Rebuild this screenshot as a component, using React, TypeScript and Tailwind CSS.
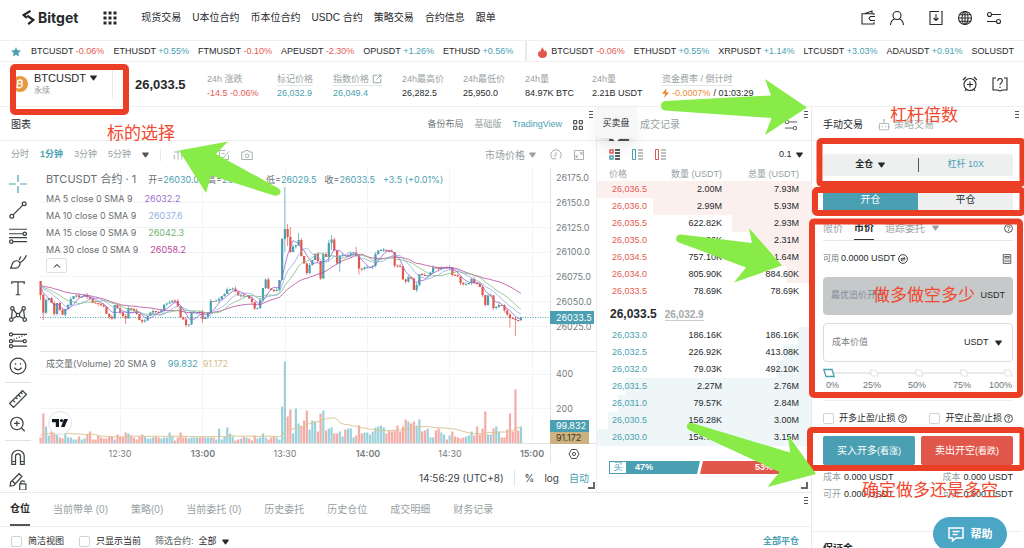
import type { ReactNode } from "react";

interface TickerItem {
  pair: string;
  change: string;
}

interface BookRow {
  price: string;
  amount: string;
  total: string;
  depth: number;
}

const navLinks = ["现货交易", "U本位合约", "币本位合约", "USDC 合约", "策略交易", "合约信息", "跟单"];

const favorites: TickerItem[] = [
  { pair: "BTCUSDT", change: "-0.06%" },
  { pair: "ETHUSDT", change: "+0.55%" },
  { pair: "FTMUSDT", change: "-0.10%" },
  { pair: "APEUSDT", change: "-2.30%" },
  { pair: "OPUSDT", change: "+1.26%" },
  { pair: "ETHUSD", change: "+0.56%" },
];

const hotPairs: TickerItem[] = [
  { pair: "BTCUSDT", change: "-0.06%" },
  { pair: "ETHUSDT", change: "+0.55%" },
  { pair: "XRPUSDT", change: "+1.14%" },
  { pair: "LTCUSDT", change: "+3.03%" },
  { pair: "ADAUSDT", change: "+0.91%" },
  { pair: "SOLUSDT", change: "" },
];

const asks: BookRow[] = [
  { price: "26,036.5", amount: "2.00M", total: "7.93M", depth: 100 },
  { price: "26,036.0", amount: "2.99M", total: "5.93M", depth: 74 },
  { price: "26,035.5", amount: "622.82K", total: "2.93M", depth: 37 },
  { price: "26,035.0", amount: "671.06K", total: "2.31M", depth: 28 },
  { price: "26,034.5", amount: "757.10K", total: "1.64M", depth: 20 },
  { price: "26,034.0", amount: "805.90K", total: "884.60K", depth: 11 },
  { price: "26,033.5", amount: "78.69K", total: "78.69K", depth: 0 },
];

const bids: BookRow[] = [
  { price: "26,033.0", amount: "186.16K", total: "186.16K", depth: 6 },
  { price: "26,032.5", amount: "226.92K", total: "413.08K", depth: 13 },
  { price: "26,032.0", amount: "79.03K", total: "492.10K", depth: 16 },
  { price: "26,031.5", amount: "2.27M", total: "2.76M", depth: 87 },
  { price: "26,031.0", amount: "79.57K", total: "2.84M", depth: 90 },
  { price: "26,030.5", amount: "156.28K", total: "3.00M", depth: 95 },
  { price: "26,030.0", amount: "154.72K", total: "3.15M", depth: 100 },
];

const positionTabs = [
  "仓位", "当前带单 (0)", "策略(0)", "当前委托 (0)", "历史委托", "历史仓位", "成交明细", "财务记录",
];

// One close per minute, already on the chart's vertical scale
const closes = [
  295, 312.7, 300, 298, 303, 314, 303, 310, 314.7, 309, 305, 299, 296, 295.5, 297, 296.5, 295, 297, 299, 302.5,
  303, 304, 305, 306.5, 314, 317, 318.5, 305, 308, 312.5, 316, 318.5, 308, 309, 310.5, 314, 320, 321.5, 320.5, 316,
  312.5, 311, 312, 312.5, 310.5, 304.5, 303.5, 302.5, 300.5, 301, 306, 317.5, 319.5, 325, 324.5, 313, 312.5, 312, 312.3, 319,
  317, 313, 301, 301.3, 300.5, 299, 296, 294, 289.5, 289, 288.5, 291.5, 295.5, 295.3, 296, 296, 298.5, 302, 308.5, 308.3,
  300, 288, 279.5, 288.5, 290, 290.2, 290, 280, 239, 229, 237, 252, 246.5, 245, 240, 256, 263.5, 273, 265, 260,
  254, 261, 278.5, 254, 257, 243, 239.5, 250.5, 263.5, 256, 255, 255.2, 255, 253.5, 252.5, 255.5, 268.5, 269, 267.5, 267.3,
  266.8, 266, 254, 250.5, 250, 249.8, 251, 251.2, 252, 265.5, 266, 266.5, 279.5, 281.5, 277, 278.5, 290, 285, 274, 275,
  275.5, 275.3, 272.5, 267.5, 268, 269, 268, 267.3, 267.7, 267.3, 275, 275.2, 276.5, 283, 284.3, 284.2, 283, 279, 283, 284,
  287, 295, 305, 295.5, 295.3, 308, 307, 305, 305.2, 310.5, 314.5, 318, 318.6, 320, 320.2, 317.7,
];

const volumes = [
  6, 30, 17, 8, 12, 10, 9, 6, 5, 10, 6, 6, 4, 4, 7, 4, 5, 9, 12, 4, 4, 8, 6, 5, 5, 7, 7, 4, 9, 7, 6, 11, 10, 8, 6, 4, 7, 9, 7, 5,
  5, 6, 7, 6, 5, 6, 6, 11, 7, 3, 6, 11, 6, 6, 5, 6, 6, 6, 6, 7, 6, 6, 6, 6, 4, 15, 4, 7, 16, 10, 7, 3, 4, 5, 7, 6, 5, 3, 8, 5,
  6, 10, 6, 4, 6, 7, 6, 4, 37, 82, 27, 34, 10, 35, 20, 17, 23, 33, 14, 23, 22, 12, 30, 33, 13, 15, 16, 10, 10, 12, 7, 14, 15, 15, 6, 8, 18, 10, 11, 11,
  9, 12, 16, 17, 18, 16, 10, 13, 12, 13, 18, 12, 17, 24, 22, 20, 22, 18, 24, 12, 13, 15, 6, 6, 13, 15, 11, 9, 4, 8, 12, 7, 6, 5, 6, 7, 8, 12, 8, 17,
  9, 15, 32, 9, 9, 15, 17, 12, 6, 6, 14, 30, 12, 54, 13, 17,
];

const longWicks: Record<number, [number, number]> = {
  0: [281, 300],
  1: [293, 320],
  31: [314, 324],
  59: [310, 323],
  89: [187, 252],
  90: [224, 246],
  91: [227, 253],
  94: [233, 246],
  103: [252, 279],
  105: [240, 262],
  106: [235, 250],
  109: [255, 272],
  115: [247, 257],
  116: [254, 274.5],
  171: [313, 327.5],
  173: [317, 336],
};

const candleX = (i: number) => 40.5 + i * 2.745;

function averageLine(values: number[], period: number, before: number) {
  return values
    .map((_, i) => {
      let sum = 0;
      for (let k = 0; k < period; k++) sum += i - k >= 0 ? values[i - k] : before;
      return `${candleX(i).toFixed(1)},${(sum / period).toFixed(1)}`;
    })
    .join(" ");
}

function changeColor(change: string) {
  return change.startsWith("-") ? "text-[#e35b50]" : "text-[#4a9fb2]";
}

function Caret({ className = "" }: { className?: string }) {
  return (
    <svg className={`w-[7px] h-[6px] shrink-0 ${className}`} viewBox="0 0 7 6" fill="currentColor" aria-hidden="true">
      <path d="M.8.5h5.4c.6 0 .8.6.5 1L4 5.2c-.3.4-.7.4-1 0L.3 1.5C0 1.1.2.5.8.5Z" />
    </svg>
  );
}

function Dropdown({ label, value, className = "" }: { label: string; value: string; className?: string }) {
  return (
    <label className={`inline-flex items-center gap-1 ${className}`}>
      <select aria-label={label} className="appearance-none bg-transparent outline-none cursor-pointer">
        <option>{value}</option>
      </select>
      <Caret />
    </label>
  );
}

function Icon({ children, className = "w-4 h-4" }: { children: ReactNode; className?: string }) {
  return (
    <svg
      className={`shrink-0 ${className}`}
      viewBox="0 0 16 16"
      fill="none"
      stroke="currentColor"
      strokeWidth="1.1"
      aria-hidden="true"
    >
      {children}
    </svg>
  );
}

function DragHandle({ className = "" }: { className?: string }) {
  return (
    <svg className={`w-[4px] h-[7px] ${className}`} viewBox="0 0 4 7" stroke="#555" strokeWidth="1" aria-hidden="true">
      <path d="M0 .5h4M0 3.5h4M0 6.5h4" />
    </svg>
  );
}

function ResizeCorner({ className = "" }: { className?: string }) {
  return <span className={`w-[7px] h-[7px] border-r-2 border-b-2 border-[#666] ${className}`} />;
}

function HelpMark() {
  return (
    <Icon className="w-[9px] h-[9px]">
      <circle cx="8" cy="8" r="7" strokeWidth="1.5" />
      <path d="M5.8 6.3c0-3 4.4-3 4.4 0 0 1.7-2.2 1.5-2.2 3.4M8 11v1.5" strokeWidth="1.5" />
    </Icon>
  );
}

function Sliders({ className }: { className?: string }) {
  return (
    <Icon className={className}>
      <circle cx="3.5" cy="4.5" r="2" />
      <path d="M5.5 4.5H15M1 11.5h9.5" />
      <circle cx="12.5" cy="11.5" r="2" />
    </Icon>
  );
}

function Header() {
  return (
    <header className="flex items-center h-[41px] pb-[5px] px-[22px] border-b border-[#eef0f0] shrink-0">
      <a href="#home" className="flex items-center gap-[3px] font-['Inter'] font-bold text-[14px]" aria-label="Bitget">
        <svg className="w-[13px] h-[15px]" viewBox="0 0 13 15" fill="none" stroke="#1f2426" strokeWidth="2.2" aria-hidden="true">
          <path d="M8.5.9 1.7 5l3.2 3" />
          <path d="m5.200 5.600 6.200 4.400-5.200 4.200" />
        </svg>
        Bitget
      </a>
      <svg className="w-[14px] h-[14px] ml-[25px] mr-[24px]" viewBox="0 0 14 14" fill="#26292b" aria-hidden="true">
        {[0, 5, 10].map((y) => [0, 5, 10].map((x) => <rect key={`${x}-${y}`} x={x + 0.5} y={y + 0.5} width="3" height="3" />))}
      </svg>
      <nav className="flex gap-[11px] text-[10px]">
        {navLinks.map((link) => (
          <a key={link} href="#nav">{link}</a>
        ))}
      </nav>
      <div className="flex items-center gap-[13px] ml-auto">
        <Icon>
          <path d="M14 5V3.8H2V14h12v-2M4.5 3.8 12 1v2.8M15 6.5h-4.5L9 8.5l1.5 2H15" />
        </Icon>
        <Icon className="w-4 h-4 mr-[10px]">
          <circle cx="8" cy="5.5" r="4" />
          <path d="M1.5 15c.3-3.5 2-5.3 4-6M14.5 15c-.3-3.5-2-5.3-4-6" />
        </Icon>
        <Icon>
          <path d="M11 1.5H2v13h12v-13h-1M8 4v6.5M5.5 8 8 10.5 10.5 8" />
        </Icon>
        <Icon>
          <circle cx="8" cy="8" r="6.5" />
          <ellipse cx="8" cy="8" rx="3" ry="6.5" />
          <path d="M1.5 8h13M2.5 4.8h11M2.5 11.2h11M8 1.5v13" />
        </Icon>
        <Sliders />
      </div>
    </header>
  );
}

function TickerList({ items }: { items: TickerItem[] }) {
  return (
    <div className="flex gap-[9px]">
      {items.map((item) => (
        <a key={item.pair} href="#pair" className="whitespace-nowrap">
          {item.pair} <span className={changeColor(item.change)}>{item.change}</span>
        </a>
      ))}
    </div>
  );
}

function Ticker() {
  return (
    <div className="flex items-center h-[21px] border-b border-[#f0f2f2] text-[9px] overflow-hidden shrink-0">
      <div className="flex items-center h-full gap-[10px] pt-[2px] pl-[11px] pr-[12px] border-r-2 border-[#e8eaea] overflow-hidden">
        <svg className="w-[10px] h-[10px] shrink-0" viewBox="0 0 10 10" fill="#4a9fb2" aria-hidden="true">
          <path d="m5 0 1.4 3.3 3.6.3-2.7 2.4.8 3.5L5 7.7 1.9 9.5l.8-3.5L0 3.6l3.6-.3Z" />
        </svg>
        <TickerList items={favorites} />
      </div>
      <div className="flex items-center h-full gap-1 pt-[2px] pl-[11px]">
        <svg className="w-[9px] h-[11px] shrink-0" viewBox="0 0 9 11" fill="#e2574c" aria-hidden="true">
          <path d="M4.3 0c.4 2 2 2.8 2.2 4.6.5-.3.7-.9.7-1.5C8.5 4.5 9 5.7 9 7c0 2.5-2 4-4.5 4S0 9.4 0 7c0-1.6.8-2.6 1.4-3.3.1.8.3 1.2.8 1.5C2.2 3 3.9 2.2 4.3 0Z" />
        </svg>
        <TickerList items={hotPairs} />
      </div>
    </div>
  );
}

function Stat({ label, children, underline }: { label: ReactNode; children: ReactNode; underline?: boolean }) {
  return (
    <div className="flex flex-col items-start whitespace-nowrap">
      <dt className={`h-[14px] leading-[14px] text-[#98a1a2] ${underline ? "border-b border-[#e4e7e7]" : ""}`}>{label}</dt>
      <dd className="h-[14px] leading-[14px]">{children}</dd>
    </div>
  );
}

function InfoBar() {
  return (
    <section className="flex items-center h-[45px] pl-3 pr-4 border-b border-[#eef0f0] text-[9px] shrink-0">
      <svg className="w-4 h-4 shrink-0" viewBox="0 0 16 16" aria-hidden="true">
        <circle cx="8" cy="8" r="8" fill="#e8983e" />
        <path
          d="M6 4.2 5 11.4M5.5 4.5h3.3c2.2 0 2 3.1-.3 3.2H6M8.5 7.7c2.6 0 2.1 3.6-.5 3.6H4.5M8 3v1.5M7 11.3v1.5"
          fill="none"
          stroke="#fff"
          strokeWidth="1.3"
        />
      </svg>
      <div className="flex flex-col w-[79px] ml-[6px] border-r border-[#e8eaea] h-[30px] justify-center">
        <Dropdown label="交易对" value="BTCUSDT" className="text-[11px] leading-[13px]" />
        <span className="text-[8px] leading-[12px] text-[#8d9697]">永续</span>
      </div>
      <strong className="w-[72px] ml-[22px] pt-[2px] text-[13px]">26,033.5</strong>
      <dl className="grid grid-cols-[70px_56px_69px_61px_62px_67px_70px_auto] pt-[3px]">
        <Stat label="24h 涨跌"><span className="text-[#e35b50]">-14.5 -0.06%</span></Stat>
        <Stat label="标记价格" underline><span className="text-[#4a9fb2]">26,032.9</span></Stat>
        <Stat
          underline
          label={
            <span className="flex items-center gap-[3px]">
              指数价格
              <Icon className="w-[10px] h-[10px]">
                <path d="M8 2H2v12h12V8M7 9l7-7M10 1.5h4.5V6" strokeWidth="1.5" />
              </Icon>
            </span>
          }
        >
          <span className="text-[#4a9fb2]">26,049.4</span>
        </Stat>
        <Stat label="24h最高价">26,282.5</Stat>
        <Stat label="24h最低价">25,950.0</Stat>
        <Stat label="24h量">84.97K BTC</Stat>
        <Stat label="24h量">2.21B USDT</Stat>
        <Stat label="资金费率 / 倒计时" underline>
          <span className="flex items-center gap-[3px]">
            <svg className="w-[7px] h-[10px]" viewBox="0 0 7 10" fill="#ec8b35" aria-hidden="true">
              <path d="M4.5 0 0 5.8h3L2.3 10 7 4.2H4Z" />
            </svg>
            <span className="text-[#ec8b35]">-0.0007%</span> / 01:03:29
          </span>
        </Stat>
      </dl>
      <div className="flex items-center gap-[14px] ml-auto">
        <Icon>
          <circle cx="8" cy="8.5" r="6" />
          <path d="M8 5.5v6M5 8.5h6M1 4l3-3M15 4l-3-3M4 13.5 3 15M12 13.5l1 1.5" />
        </Icon>
        <Icon>
          <path d="M4 2H1v12h4.5L8 15l2.5-1H15V2h-3M5.8 5c0-3.3 4.5-3.3 4.5 0C10.3 7 8 6.8 8 9M8 10.5V12" />
        </Icon>
      </div>
    </section>
  );
}

function DrawingToolbar() {
  const icon = "w-[18px] h-[18px]";
  return (
    <div className="flex flex-col items-center w-[36px] pt-2 text-[#3c4346] overflow-hidden h-[323px]">
      <div className="flex flex-col gap-[8px]">
        <Icon className={`${icon} text-[#4a9fb2]`}>
          <path d="M8 0v6M8 10v6M0 8h6M10 8h6" />
        </Icon>
        <Icon className={icon}>
          <circle cx="2.5" cy="13.5" r="1.7" />
          <circle cx="13.5" cy="2.5" r="1.7" />
          <path d="m3.7 12.3 8.6-8.6" />
        </Icon>
        <Icon className={icon}>
          <path d="M0 2h16M0 6h12.5M0 9.5h16M3.5 13H16" />
          <circle cx="14" cy="6" r="1.5" />
          <circle cx="2" cy="13" r="1.5" />
        </Icon>
        <Icon className={icon}>
          <path d="M1 13.5c2-1 1-3 2.5-5s5-2.3 6 0c1 2.5-1.5 5-3.5 5ZM9 6.5 10.5 3M10 8.5c2-1 4-3 5.5-6.5" />
        </Icon>
        <Icon className={icon}>
          <path d="M2.5 4.5v-2h11v2M8 2.5V14M6 14h4" />
        </Icon>
        <Icon className={icon}>
          <circle cx="3" cy="3" r="1.5" />
          <circle cx="13" cy="3" r="1.5" />
          <circle cx="2" cy="13" r="1.5" />
          <circle cx="14" cy="13" r="1.5" />
          <circle cx="8" cy="9" r="1.5" />
          <path d="m3 4.5-.8 7M13 4.5l.8 7M4 4.2 7 8M12 4.2 9 8M3.2 12 7 10M12.8 12 9 10" />
        </Icon>
        <Icon className={icon}>
          <circle cx="1.8" cy="3" r="1.4" />
          <circle cx="1.8" cy="9" r="1.4" />
          <circle cx="14" cy="9" r="1.4" />
          <circle cx="1.8" cy="13.5" r="1.4" />
          <path d="M3.2 3H16M3.2 9h9.4M3.2 13.5H16" />
          <path d="m4 7.5 10-4" strokeDasharray="1 1.5" />
        </Icon>
        <Icon className={icon}>
          <circle cx="8" cy="8" r="7" />
          <path d="M4.8 9.5c1.5 2.5 4.9 2.5 6.4 0M5.8 5.5v1.3M10.2 5.5v1.3" />
        </Icon>
      </div>
      <hr className="w-[26px] my-[7px] border-[#dfe2e4]" />
      <div className="flex flex-col gap-[7px]">
        <Icon className={icon}>
          <path d="M.5 12 12 .5 15.5 4 4 15.5ZM3.5 9l2 2M6 6.5 7.5 8M8.3 4.2l2 2M10.5 2 12 3.5" />
        </Icon>
        <Icon className={icon}>
          <circle cx="7" cy="7.5" r="5.5" />
          <path d="M7 5v5M4.5 7.5h5M11 11.5l3 3" />
        </Icon>
      </div>
      <hr className="w-[26px] my-[7px] border-[#dfe2e4]" />
      <div className="flex flex-col gap-[6px]">
        <Icon className={icon}>
          <path d="M2.5 14.5v-7a5.5 5.5 0 0 1 11 0v7h-3.3v-7a2.2 2.2 0 0 0-4.4 0v7ZM2.5 12h3.3M10.2 12h3.3" />
        </Icon>
        <Icon className={icon}>
          <path d="M1 12.5 1.5 9 9 1.5 11.5 4l-7.2 8ZM3 8l2.5 2.5M9.5 10.5V16H15v-5.5ZM10.5 10.5V9c0-1.5 3.3-1.5 3.3 0" />
        </Icon>
      </div>
    </div>
  );
}

function PriceChart() {
  return (
    <svg className="block w-full" viewBox="36 167 560 297" fontFamily="Inter, 'Noto Sans CJK SC', sans-serif" fontSize="9">
      <g stroke="#f4f5f6" strokeWidth="1">
        {[120.5, 202.5, 285.5, 367.5, 449.5, 532.5].map((x) => (
          <path key={x} d={`M${x} 168V444`} />
        ))}
        {[202.5, 227.5, 252.5, 276.5, 301.5, 326.5, 374.5, 408.5].map((y) => (
          <path key={y} d={`M40 ${y}H550`} />
        ))}
      </g>
      {volumes.map((v, i) => (
        <rect
          key={i}
          x={candleX(i) - 1}
          y={443.5 - v}
          width="2.2"
          height={v}
          fill={closes[i] <= (closes[i - 1] ?? 281) ? "#9dd1da" : "#f3aca6"}
        />
      ))}
      <polyline points={averageLine(volumes.map((v) => 443 - v), 20, 435)} fill="none" stroke="#dcc798" />
      <path d="M40 317.5H550" stroke="#4a9fb2" strokeDasharray="1 1.5" />
      {closes.map((close, i) => {
        const open = i === 0 ? 281 : closes[i - 1];
        const color = close <= open ? "#4a9fb2" : "#e2574c";
        const top = Math.min(open, close);
        const bottom = Math.max(open, close);
        const [high, low] = longWicks[i] ?? [top - (i % 3), bottom + ((i * 7) % 4) * 0.7];
        return (
          <g key={i}>
            <path d={`M${candleX(i)} ${high}V${low}`} stroke={color} strokeWidth="0.7" />
            <rect x={candleX(i) - 1} y={top} width="2.2" height={Math.max(bottom - top, 1)} fill={color} />
          </g>
        );
      })}
      <g fill="none" strokeWidth="0.8">
        <polyline points={averageLine(closes, 30, 285)} stroke="#b8479a" />
        <polyline points={averageLine(closes, 15, 285)} stroke="#7dbb7c" />
        <polyline points={averageLine(closes, 10, 285)} stroke="#93abe0" />
        <polyline points={averageLine(closes, 5, 285)} stroke="#9468cf" />
      </g>
      <g stroke="#e0e3e5">
        <path d="M40 351.5H597M40 443.5H597M550.5 168V463" />
      </g>
      <g fill="#777c80">
        {[26175, 26150, 26125, 26100, 26075, 26050, 26025].map((price, i) => (
          <text key={price} x="556" y={181 + i * 24.75}>{`${price}.0`}</text>
        ))}
        <text x="556" y="377">400</text>
        <text x="556" y="412">200</text>
        <g textAnchor="middle">
          <text x="120" y="457">12:30</text>
          <text x="203" y="457" fontWeight="600">13:00</text>
          <text x="285" y="457">13:30</text>
          <text x="368" y="457" fontWeight="600">14:00</text>
          <text x="450" y="457">14:30</text>
          <text x="532" y="457" fontWeight="600">15:00</text>
        </g>
      </g>
      <rect x="550" y="311" width="44" height="13" fill="#4a9fb2" />
      <text x="556" y="321" fill="#fff">26033.5</text>
      <rect x="550" y="420" width="39" height="12" fill="#4a9fb2" />
      <text x="556" y="429" fill="#fff">99.832</text>
      <rect x="550" y="432" width="39" height="12" fill="#cbb27f" />
      <text x="556" y="441" fill="#3d3520">91.172</text>
      <g fill="none" stroke="#4a4f52">
        <path d="M571.5 449.5h5L579 454l-2.5 4.5h-5L569 454Z" />
        <circle cx="574" cy="454" r="1.6" />
      </g>
      <circle cx="60" cy="423" r="11.5" fill="#fff" stroke="#e0e3eb" />
      <path d="M52 419h7v8h-3.2v-4.8H52ZM64 419h4l-3.5 8H61Z" fill="#131722" />
      <circle cx="61.5" cy="420.6" r="1.6" fill="#131722" />
    </svg>
  );
}

function ChartLegend() {
  const averages = [
    { label: "MA 5 close 0 SMA 9", value: "26032.2", color: "text-[#9a6fd0]" },
    { label: "MA 10 close 0 SMA 9", value: "26037.6", color: "text-[#93b0e0]" },
    { label: "MA 15 close 0 SMA 9", value: "26042.3", color: "text-[#6fb56e]" },
    { label: "MA 30 close 0 SMA 9", value: "26058.2", color: "text-[#b8479a]" },
  ];
  return (
    <div className="absolute left-[10px] top-[2px] flex flex-col text-[9px] leading-[17px] text-[#6a6f72] whitespace-nowrap">
      <div className="flex items-baseline gap-[12px] leading-[20px]">
        <span className="text-[11px]">BTCUSDT 合约 · 1</span>
        <span className="flex gap-[8px]">
          {[["开", "26030.0"], ["高", "26034.0"], ["低", "26029.5"], ["收", "26033.5"]].map(([key, value]) => (
            <span key={key}>{key}=<span className="text-[#4a9fb2]">{value}</span></span>
          ))}
          <span className="text-[#4a9fb2]">+3.5 (+0.01%)</span>
        </span>
      </div>
      {averages.map((item) => (
        <div key={item.label} className="flex gap-[12px]">
          {item.label}
          <span className={item.color}>{item.value}</span>
        </div>
      ))}
      <button aria-label="收起" className="flex items-center justify-center w-[21px] h-[15px] rounded-[2px] border border-[#dde0e8] bg-white">
        <Icon className="w-[8px] h-[8px] text-black">
          <path d="m2 11 6-6 6 6" strokeWidth="2" />
        </Icon>
      </button>
    </div>
  );
}

function ChartPanel() {
  return (
    <section className="relative flex flex-col flex-1 min-w-0 border-r border-[#eceeee] text-[#98a1a2]">
      <DragHandle className="absolute right-[3px] top-[4px]" />
      <div className="flex items-center h-[34px] pt-[2px] pl-[11px] pr-[13px] border-b border-[#eef0f0] text-[9px]">
        <h2 className="text-[10px] text-[#26292b]">图表</h2>
        <div className="flex items-center gap-[11px] ml-auto">
          <button className="text-[#70777a]">备份布局</button>
          <button>基础版</button>
          <button className="text-[#4a9fb2]">TradingView</button>
          <Icon className="w-[10px] h-[10px] text-[#26292b]">
            <path d="M1 1h5v5H1ZM10 1h5v5h-5ZM1 10h5v5H1ZM10 10h5v5h-5Z" strokeWidth="1.5" />
          </Icon>
        </div>
      </div>
      <div className="flex items-center h-[26px] pt-[2px] pl-[11px] pr-[11px] text-[9px]">
        <div className="flex items-center gap-[11px]">
          <button>分时</button>
          <button className="font-bold text-[#4a9fb2]">1分钟</button>
          <button>3分钟</button>
          <button>5分钟</button>
          <button aria-label="更多周期"><Caret className="text-[#555]" /></button>
          <span className="w-px h-3 bg-[#e8eaea]" />
          <Icon className="w-3 h-3"><path d="M8 2v12M3 8v6M13 6v8M3 4h6" /></Icon>
          <Icon className="w-3 h-3"><path d="M2 2h12v12H2ZM5 8h6" /></Icon>
          <Icon className="w-3 h-3"><path d="M10 2H2v12h12V8M5 6h4M5 10l2 2 8-9" /></Icon>
          <Icon className="w-3 h-3">
            <path d="M1 4h4l1-2h4l1 2h4v10H1Z" />
            <circle cx="8" cy="9" r="2.5" />
          </Icon>
        </div>
        <div className="flex items-center gap-[11px] ml-auto">
          <Dropdown label="价格类型" value="市场价格" className="text-[10px]" />
          <Icon className="w-[12px] h-[12px] ml-[3px]">
            <path d="M13 13A7 7 0 1 0 3 13h5M8 4v4.5L5 10" />
          </Icon>
          <Icon className="w-[12px] h-[12px]">
            <path d="M2 2h12v12H2ZM9 5h3v3M7 11H4V8M12 5 9.5 7.5M4 11l2.5-2.5" />
          </Icon>
        </div>
      </div>
      <div className="flex">
        <DrawingToolbar />
        <div className="relative flex-1 min-w-0 font-['Inter','Noto_Sans_CJK_SC',sans-serif]">
          <PriceChart />
          <ChartLegend />
          <div className="absolute left-[10px] top-[188px] flex gap-[12px] text-[9px] leading-[17px] text-[#6a6f72]">
            成交量(Volume) 20 SMA 9
            <span className="flex gap-[5px] text-[#4a9fb2]">
              99.832 <span className="text-[#d3bd8b]">91.172</span>
            </span>
          </div>
          <div className="flex items-center justify-end h-[28px] pr-[7px] gap-[10px] text-[10px] text-[#3c4145]">
            14:56:29 (UTC+8)
            <span className="w-px h-4 bg-[#e0e3e5]" />
            <button>%</button>
            <button>log</button>
            <button className="text-[#4a9fb2]">自动</button>
          </div>
        </div>
      </div>
      <ResizeCorner className="absolute right-[1px] bottom-[3px]" />
    </section>
  );
}

function BookRows({ rows, side }: { rows: BookRow[]; side: "ask" | "bid" }) {
  return (
    <tbody>
      {rows.map((row) => (
        <tr
          key={row.price}
          className="h-[17px] leading-[17px]"
          style={{
            background: `linear-gradient(to left, ${side === "ask" ? "#fcf0ef" : "#eef6f8"} ${row.depth}%, transparent ${row.depth}%)`,
          }}
        >
          <td className={`pl-[15px] ${side === "ask" ? "text-[#e35b50]" : "text-[#4a9fb2]"}`}>{row.price}</td>
          <td className="text-right">{row.amount}</td>
          <td className="text-right pr-[12px]">{row.total}</td>
        </tr>
      ))}
    </tbody>
  );
}

function BookLayoutIcon({ kind }: { kind: "both" | "bid" | "ask" }) {
  return (
    <svg className="w-[11px] h-[11px]" viewBox="0 0 11 11" fill="none" aria-hidden="true">
      {kind === "both" ? (
        <>
          <path d="M1 1h3v3H1Z" stroke="#e2574c" strokeWidth="1.5" />
          <path d="M1 7h3v3H1Z" stroke="#4a9fb2" strokeWidth="1.5" />
        </>
      ) : (
        <path d="M.5.5h3v10h-3Z" stroke={kind === "ask" ? "#e2574c" : "#4a9fb2"} />
      )}
      <path d="M6 1h5M6 4h5M6 7h5M6 10h5" stroke={kind === "both" ? "#26292b" : "#a5acad"} strokeWidth="1.3" />
    </svg>
  );
}

function OrderBook() {
  return (
    <section className="relative flex flex-col w-[214px] shrink-0 text-[9px]">
      <DragHandle className="absolute right-[3px] top-[4px]" />
      <div className="flex items-center h-[34px] pt-[2px] pl-[43px] pr-[13px] border-b border-[#eef0f0] text-[10px] text-[#98a1a2]">
        <button>成交记录</button>
        <span className="absolute left-[12px] top-[32px] w-5 h-[2px] bg-[#555]" />
        <Sliders className="w-[14px] h-[14px] ml-auto text-[#555]" />
      </div>
      <div className="absolute -left-[2px] top-0 flex items-center justify-center w-[42px] h-[31px] pt-[2px] bg-[#f7f7f7] rounded-[2px] shadow-lg">
        买卖盘
        <span className="absolute -bottom-[3px] w-[6px] h-[6px] rotate-45 bg-[#f7f7f7]" />
      </div>
      <div className="flex items-center h-[27px] gap-3 pl-[12px] pr-[8px]">
        <button aria-label="全部"><BookLayoutIcon kind="both" /></button>
        <button aria-label="买盘"><BookLayoutIcon kind="bid" /></button>
        <button aria-label="卖盘"><BookLayoutIcon kind="ask" /></button>
        <Dropdown label="精度" value="0.1" className="ml-auto" />
      </div>
      <table className="w-full table-fixed">
        <thead className="text-[#98a1a2]">
          <tr className="h-[13px] leading-[13px]">
            <th className="w-[58px] pl-[12px] text-left font-normal">价格</th>
            <th className="w-[67px] text-right font-normal">数量 (USDT)</th>
            <th className="pr-[12px] text-right font-normal">总量 (USDT)</th>
          </tr>
        </thead>
        <BookRows rows={asks} side="ask" />
        <tbody>
          <tr className="h-[27px]">
            <td colSpan={3} className="pl-[13px]">
              <span className="text-[12px] font-bold">26,033.5</span>
              <span className="ml-[8px] text-[10px] font-bold text-[#a3aaab] border-b border-[#c9cdcd]">26,032.9</span>
            </td>
          </tr>
        </tbody>
        <BookRows rows={bids} side="bid" />
      </table>
      <div className="flex h-[13px] mt-[15px] mx-[12px] leading-[13px] text-white font-bold">
        <span className="w-[18px] text-center font-normal text-[#4a9fb2] border border-[#4a9fb2] leading-[11px]">买</span>
        <span className="w-[73px] pl-[8px] bg-[#4a9fb2] [clip-path:polygon(0_0,100%_0,calc(100%-3px)_100%,0_100%)]">47%</span>
        <span className="flex-1 pr-[26px] text-right bg-[#e2574c] [clip-path:polygon(3px_0,100%_0,100%_100%,0_100%)]">53%</span>
      </div>
      <ResizeCorner className="absolute right-[3px] bottom-[3px]" />
    </section>
  );
}

function PositionsPanel() {
  return (
    <section className="relative flex-1 border-t border-[#e8eaea]">
      <DragHandle className="absolute right-[3px] top-[4px]" />
      <nav className="flex items-center h-[34px] gap-[23px] pl-[10px] border-b border-[#eef0f0] text-[10px] text-[#98a1a2]">
        {positionTabs.map((tab, i) => (
          <button
            key={tab}
            className={i === 0 ? "h-full font-bold text-[#26292b] border-b-2 border-[#555]" : "h-full"}
          >
            {tab}
          </button>
        ))}
      </nav>
      <div className="flex items-center h-[29px] pl-[11px] pr-[12px] text-[9px]">
        <label className="flex items-center gap-[6px]">
          <input type="checkbox" className="appearance-none w-[11px] h-[11px] rounded-[2px] border border-[#cfd3d4]" />
          简洁视图
        </label>
        <label className="flex items-center gap-[6px] ml-[15px]">
          <input type="checkbox" className="appearance-none w-[11px] h-[11px] rounded-[2px] border border-[#cfd3d4]" />
          只显示当前
        </label>
        <span className="ml-[14px] text-[#555c5e]">筛选合约:</span>
        <Dropdown label="筛选合约" value="全部" className="ml-[5px]" />
        <button className="ml-auto font-bold text-[#4a9fb2]">全部平仓</button>
      </div>
    </section>
  );
}

function AmountSlider() {
  return (
    <div className="relative mt-[6px]">
      <svg className="block w-full h-[10px]" viewBox="0 0 190 10" aria-hidden="true">
        <path d="M6 5h180" stroke="#e9ebeb" strokeWidth="2" />
        {[47, 92, 137, 181].map((x) => (
          <path key={x} d={`M${x} 2h6l2 6h-6Z`} fill="#fff" stroke="#e0e3e3" />
        ))}
        <path d="M.8 1.5H9l2.2 7H3Z" fill="#fff" stroke="#4a9fb2" strokeWidth="1.3" />
      </svg>
      <input type="range" min="0" max="100" defaultValue="0" aria-label="仓位比例" className="absolute inset-0 w-full h-[10px] opacity-0" />
      <div className="grid grid-cols-[37px_45px_45px_36px_auto] pl-[3px] pt-[2px] leading-[11px] text-[9px] text-[#6d7577]">
        <span>0%</span>
        <span>25%</span>
        <span>50%</span>
        <span>75%</span>
        <span>100%</span>
      </div>
    </div>
  );
}

function TradePanel() {
  return (
    <aside className="relative w-[211px] shrink-0 border-l border-[#e8eaea] text-[9px]">
      <DragHandle className="absolute right-[3px] top-[4px]" />
      <div className="flex items-center h-[34px] pt-[2px] pl-[11px] border-b border-[#eef0f0] text-[10px]">
        <button>手动交易</button>
        <button className="flex items-center gap-[4px] ml-[15px] text-[#a9b0b1]">
          <Icon className="w-3 h-3">
            <path d="M2 6h12v8.5H2ZM8 6V2.5M0 9v3M16 9v3M5.5 9v2M10.5 9v2" />
            <circle cx="8" cy="1.5" r="1" />
          </Icon>
          策略交易
        </button>
      </div>
      <div className="flex flex-col pl-[11px] pr-[9px]">
        <div className="flex items-center h-[22px] mt-[13px] rounded-[2px] bg-[#eef0f0]">
          <div className="flex-1 text-center">
            <Dropdown label="保证金模式" value="全仓" className="font-bold" />
          </div>
          <span className="w-px h-[14px] bg-[#555]" />
          <button className="flex-1 text-[#4a9fb2]">杠杆 10X</button>
        </div>
        <div className="grid grid-cols-2 h-[22px] mt-[12px] text-[10px]">
          <button className="bg-[#4a9fb2] text-white">开仓</button>
          <button className="bg-[#eef0f0]">平仓</button>
        </div>
        <div className="flex items-center h-[31px] pt-[6px] border-b border-[#e4e7e7] text-[10px] text-[#98a1a2]">
          <button className="h-full">限价</button>
          <button className="h-full ml-[11px] font-bold text-[#26292b] border-b border-[#333]">市价</button>
          <button className="flex items-center gap-[7px] h-full ml-[11px]">追踪委托 <Caret /></button>
          <span className="ml-auto text-[#333]"><HelpMark /></span>
        </div>
        <div className="flex items-center gap-[2px] h-[36px]">
          <span className="text-[#6d7577] text-[8px]">可用</span> 0.0000 USDT
          <Icon className="w-[10px] h-[10px]">
            <circle cx="8" cy="8" r="7" strokeWidth="1.4" />
            <path d="M4.5 7h7L9 5M11.5 9.5h-7l2.5 2" strokeWidth="1.4" />
          </Icon>
          <Icon className="w-[10px] h-[10px] ml-auto mr-[1px] text-[#555]">
            <path d="M2 1h12v14H2ZM4.5 4h7v2.5h-7ZM5 9v4M8 9v4M11 9v4" strokeWidth="1.5" />
          </Icon>
        </div>
        <label className="flex items-center h-[38px] px-[8px] rounded-[4px] bg-[#c6c9ca]">
          <input disabled aria-label="价格" placeholder="最优追价开仓" className="flex-1 min-w-0 outline-none placeholder:text-[#7f8a99]" />
          USDT
        </label>
        <div className="flex items-center h-[39px] mt-[8px] pl-[8px] pr-[10px] rounded-[4px] border border-[#d9dcdd]">
          <input aria-label="成本价值" placeholder="成本价值" className="flex-1 min-w-0 outline-none placeholder:text-[#7b8284]" />
          <Dropdown label="单位" value="USDT" className="gap-[6px]" />
        </div>
        <AmountSlider />
        <div className="flex items-center justify-between h-[36px] mt-[9px] border-t border-[#eef0f0]">
          {["开多止盈/止损", "开空止盈/止损"].map((text) => (
            <label key={text} className="flex items-center">
              <input type="checkbox" className="appearance-none w-[11px] h-[11px] mr-[5px] rounded-[2px] border border-[#cfd3d4]" />
              <span className="mr-[2px]">{text}</span>
              <HelpMark />
            </label>
          ))}
        </div>
        <div className="grid grid-cols-2 gap-[6px] h-[29px] text-[10px] text-white">
          <button className="rounded-[2px] bg-[#4a9fb2]">买入开多<span className="text-[9px]">(看涨)</span></button>
          <button className="rounded-[2px] bg-[#e2574c]">卖出开空<span className="text-[9px]">(看跌)</span></button>
        </div>
        <div className="flex justify-between mt-[4px] leading-[17px]">
          {[0, 1].map((column) => (
            <dl key={column} className="grid grid-cols-[auto_auto] gap-x-[3px]">
              <dt className="text-[#98a1a2]">成本</dt>
              <dd>0.000 USDT</dd>
              <dt className="text-[#98a1a2]">可开</dt>
              <dd>0.000 USDT</dd>
            </dl>
          ))}
        </div>
      </div>
      <h3 className="mt-[28px] pl-[11px] pt-[9px] border-t border-[#eef0f0] text-[10px] font-bold">保证金</h3>
      <button className="absolute right-[15px] top-[410px] flex items-center justify-center gap-[7px] w-[74px] h-[34px] rounded-full bg-[#4ba5c5] text-white text-[11px] font-bold">
        <Icon>
          <path d="M1 2h14v10H8l-3.5 3v-3H1ZM4.5 5.5h7M4.5 8.5h5" strokeWidth="1.5" />
        </Icon>
        帮助
      </button>
    </aside>
  );
}

// Walkthrough marks laid over the trading page
function Annotations() {
  const note = "absolute text-[17px] leading-[20px] text-[#f0492f] whitespace-nowrap";
  return (
    <div className="absolute inset-0 pointer-events-none">
      <svg className="absolute left-0 top-0 w-[1024px] h-[548px]" viewBox="0 0 1024 548" fill="none">
        <g stroke="#eb3f25" strokeWidth="6">
          <rect x="13" y="67" width="113" height="45" rx="2" />
          <rect x="819.5" y="141" width="203" height="43" rx="2" />
          <rect x="815" y="190" width="207.5" height="23" rx="2" />
          <rect x="812" y="221.5" width="208" height="173.5" rx="2" />
          <rect x="810" y="430" width="212.5" height="38" rx="2" />
        </g>
        <g fill="#89eb48">
          <path d="M665 101 771 95.5 765 79l42 28.500L765 135l6.500-17L665 110.500C659.500 110 659.500 101.500 665 101Z" />
          <path d="m179 150.5 49-9-12 12.5 62 34c5 3 2 9-4 7.5l-63-20-5 17.5Z" />
          <path d="m681 234.5 71 8.5-3-15 33 37.5-48 17 12-15-67-25c-5-2-3-8.500 2-8Z" />
          <path d="m692 423 98 29.5-2-17.5 28 39-48.5 13 12-15-90.500-42c-4-3-2-8 3-7Z" />
        </g>
      </svg>
      <span className={`${note} left-[107px] top-[124px]`}>标的选择</span>
      <span className={`${note} left-[890px] top-[106px]`}>杠杆倍数</span>
      <span className={`${note} left-[873px] top-[286px]`}>做多做空多少</span>
      <span className={`${note} left-[862px] top-[481px]`}>确定做多还是多空</span>
    </div>
  );
}

export default function App() {
  return (
    <div className="relative flex flex-col h-screen overflow-hidden bg-white text-[#26292b] font-['Liberation_Sans','Noto_Sans_CJK_SC',sans-serif]">
      <Header />
      <Ticker />
      <InfoBar />
      <main className="flex flex-1 min-h-0 pr-[2px]">
        <div className="flex flex-col flex-1 min-w-0">
          <div className="flex h-[385px] shrink-0">
            <ChartPanel />
            <OrderBook />
          </div>
          <PositionsPanel />
        </div>
        <TradePanel />
      </main>
      <Annotations />
    </div>
  );
}
